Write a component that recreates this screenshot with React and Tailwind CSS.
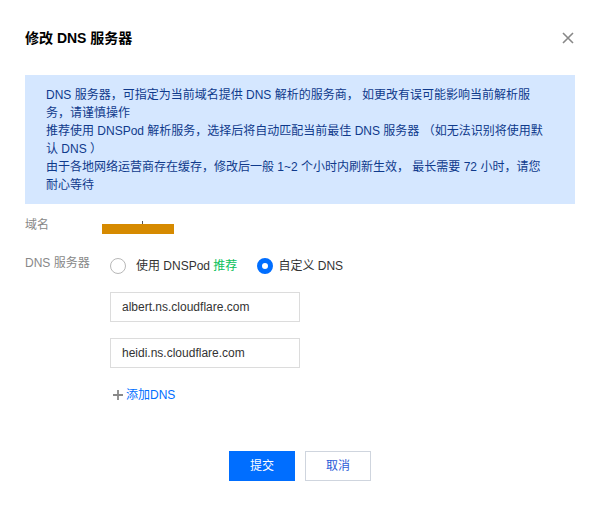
import React from "react";

const font = { fontFamily: '"Liberation Sans", "Noto Sans CJK SC", Arial, sans-serif' };

function Radio({ checked, children, gap }) {
    return (
        <label className={`flex items-center ${gap} cursor-pointer`}>
            {checked ? (
                <span className="w-4 h-4 rounded-full border-[5px] border-[#006eff] bg-white"></span>
            ) : (
                <span className="w-4 h-4 rounded-full border border-[#b8b8b8] bg-white"></span>
            )}
            <span className="text-[12px] text-[#333]">{children}</span>
        </label>
    );
}

export default function App() {
    const lines = [
        "DNS 服务器，可指定为当前域名提供 DNS 解析的服务商， 如更改有误可能影响当前解析服",
        "务，请谨慎操作",
        "推荐使用 DNSPod 解析服务，选择后将自动匹配当前最佳 DNS 服务器 （如无法识别将使用默",
        "认 DNS ）",
        "由于各地网络运营商存在缓存，修改后一般 1~2 个小时内刷新生效， 最长需要 72 小时，请您",
        "耐心等待",
    ];

    return (
        <div className="w-[600px] h-[506px] bg-white px-[25px]" style={font}>
            {/* Header */}
            <div className="pt-[28px] h-[48px] flex items-center justify-between">
                <h2 className="text-[14px] font-bold text-black leading-[20px]">修改 DNS 服务器</h2>
                <button className="w-3 h-3 text-[#888] mr-[1px]">
                    <svg viewBox="0 0 12 12" width="12" height="12">
                        <path d="M1 1 L11 11 M11 1 L1 11" stroke="currentColor" strokeWidth="1.6" />
                    </svg>
                </button>
            </div>

            {/* Info box */}
            <div className="mt-[27px] bg-[#d5e7ff] pl-[21px] pt-[11px] pb-[10px] text-[12px] leading-[18px] text-[#0f3a8c]">
                {lines.map((l, i) => (
                    <div key={i} className="whitespace-pre">{l}</div>
                ))}
            </div>

            {/* Domain row */}
            <div className="mt-[11px] flex items-center h-[20px]">
                <span className="w-[77px] text-[12px] text-[#888]">域名</span>
                <div className="relative w-[72px] h-[10px] mt-[7px] bg-[#d68a00]">
                    <span className="absolute left-[40px] -top-[3px] w-px h-[3px] bg-[#555]"></span>
                </div>
            </div>

            {/* DNS server row */}
            <div className="mt-[18px] flex items-start">
                <span className="w-[85px] h-[20px] leading-[20px] text-[12px] text-[#888]">DNS 服务器</span>
                <div className="flex flex-col">
                    <div className="mt-[3px] h-[20px] flex items-center gap-[20px]">
                        <Radio gap="gap-[10px]">
                            使用 DNSPod <span className="text-[#0abf5b]">推荐</span>
                        </Radio>
                        <Radio checked gap="gap-[5px]">自定义 DNS</Radio>
                    </div>

                    <div className="mt-[16px] flex flex-col gap-[16px]">
                        <input
                            className="w-[190px] h-[30px] border border-[#dcdcdc] px-[11px] text-[12px] text-[#333] outline-none"
                            style={font}
                            defaultValue="albert.ns.cloudflare.com"
                        />
                        <input
                            className="w-[190px] h-[30px] border border-[#dcdcdc] px-[11px] text-[12px] text-[#333] outline-none"
                            style={font}
                            defaultValue="heidi.ns.cloudflare.com"
                        />
                    </div>

                    <div className="mt-[17px] h-[20px] flex items-center pl-[3px]">
                        <svg viewBox="0 0 10 10" width="10" height="10" className="text-[#888]">
                            <path d="M5 0 V10 M0 5 H10" stroke="currentColor" strokeWidth="1.8" />
                        </svg>
                        <span className="ml-[3px] text-[12px] text-[#006eff]">添加DNS</span>
                    </div>
                </div>
            </div>

            {/* Footer */}
            <div className="mt-[46px] flex justify-center gap-[10px]">
                <button className="w-[66px] h-[30px] bg-[#006eff] text-white text-[12px]">提交</button>
                <button className="w-[66px] h-[30px] border border-[#cfd5de] bg-white text-[#2a5bd7] text-[12px]">取消</button>
            </div>
        </div>
    );
}
